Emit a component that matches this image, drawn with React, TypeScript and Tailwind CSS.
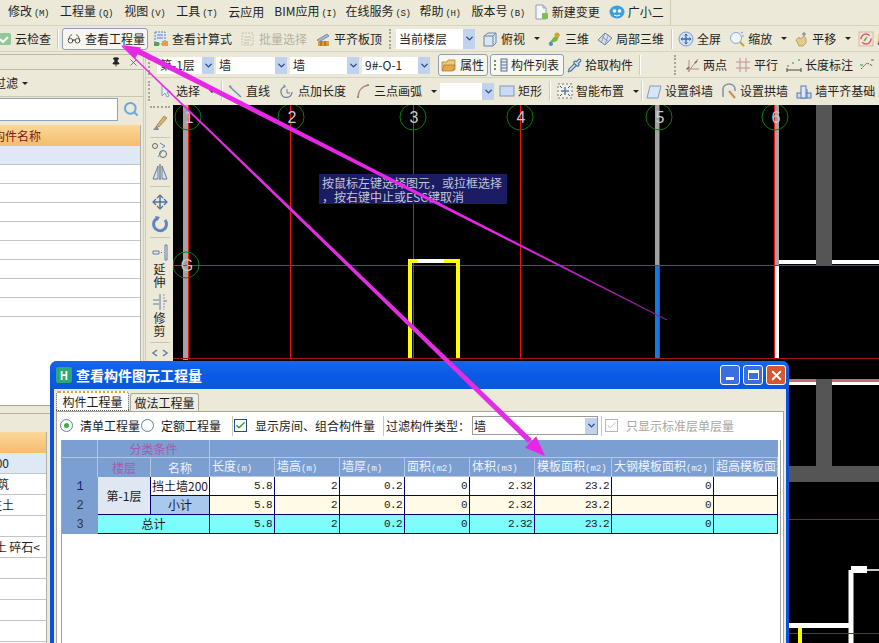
import { ReactNode } from "react";
import { Glasses, Pipette, Pin, X, Search, ChevronDown, Check } from "lucide-react";

type IconName =
  | "cloud" | "calc" | "batch" | "align" | "cube" | "three" | "local" | "full" | "zoom" | "pan" | "turn"
  | "attr" | "list" | "two" | "para" | "dim" | "angle" | "cursor" | "line" | "ptlen" | "arc" | "rect"
  | "smart" | "slant" | "arch" | "base" | "newdoc" | "bot";

const glyphs: Record<IconName, ReactNode> = {
  cloud: <><rect x="1" y="2" width="14" height="12" rx="2" fill="#8fc99a" /><path d="M4 8l3 3 5-5" stroke="#fff" strokeWidth="2" fill="none" /></>,
  calc: <><rect x="2" y="1" width="10" height="12" fill="#dfe8f5" stroke="#5a7fb5" strokeDasharray="2 1" /><path d="M4 4h6M4 7h6" stroke="#5a7fb5" /><rect x="1" y="11" width="5" height="4" fill="#5aa05a" /><rect x="9" y="10" width="6" height="5" fill="#e0a050" /></>,
  batch: <><rect x="2" y="2" width="11" height="12" fill="none" stroke="#c4c1b0" strokeDasharray="2 1" /><path d="M4 6h7M4 9h7M4 12h5" stroke="#c4c1b0" /></>,
  align: <><path d="M2 9l10-6 2 2-10 6z" fill="#9db7d8" stroke="#667" strokeWidth=".6" /><rect x="3" y="10" width="11" height="5" fill="#d99a3c" /><path d="M6 10v5M10 10v5" stroke="#8a5a20" /></>,
  cube: <><path d="M2 5l4-3h8v10l-3 3H2z" fill="#dbe6f3" stroke="#6b87a8" /><path d="M2 5h9v10M11 5l3-3" stroke="#6b87a8" fill="none" /></>,
  three: <><path d="M2 13l6-7 6-3-3 7z" fill="#79b54a" /><circle cx="11" cy="4" r="2.5" fill="#d9a03c" /><circle cx="5" cy="13" r="2" fill="#4f8fc9" /></>,
  local: <><path d="M1 9l7-7 7 5-7 7z" fill="#d7e0ea" stroke="#6f84a0" /><path d="M4.5 5.5l7 5M8 2l-3.500 9M11 4.500l-3 9" stroke="#6f84a0" strokeWidth=".7" /></>,
  full: <><circle cx="8" cy="8" r="7" fill="#cfe0f4" stroke="#7b9cc7" /><path d="M8 3v10M3 8h10" stroke="#3f66a5" strokeWidth="1.300" /><path d="M6.500 4.500L8 3l1.500 1.500M6.500 11.500L8 13l1.500-1.500M4.500 6.500L3 8l1.500 1.500M11.500 6.500L13 8l-1.500 1.500" stroke="#3f66a5" fill="none" /></>,
  zoom: <><circle cx="7" cy="7" r="5.500" fill="#eef4fb" stroke="#8da9c9" /><path d="M11 11l4 4" stroke="#c9a040" strokeWidth="2" /><path d="M12 2l2-1M13 5h2" stroke="#7b9cc7" /></>,
  pan: <><path d="M3 9l3-3 1 2 4-3 2 3v4l-3 3H6z" fill="#e9c98a" stroke="#a8894f" strokeWidth=".7" /><path d="M11 1v4M9 3h4" stroke="#7b7b7b" /></>,
  turn: <><rect x="1" y="1" width="14" height="14" fill="#f4e7d8" stroke="#d5b8a0" /><circle cx="8" cy="8" r="5" fill="none" stroke="#d85a6a" strokeWidth="1.500" strokeDasharray="12 3" /><path d="M6 10l3-4" stroke="#6fa86f" strokeWidth="1.500" /></>,
  attr: <><path d="M1 5h5l1-2h7v10H1z" fill="#f0c87a" stroke="#a07a30" strokeWidth=".7" /><path d="M3 8h11l-2 6H1z" fill="#e8a848" stroke="#a07a30" strokeWidth=".7" /></>,
  list: <><path d="M2 3v11" stroke="#6f8f6f" strokeDasharray="2 2" strokeWidth="2" /><rect x="8" y="2" width="6" height="12" fill="#e8eef6" stroke="#5a7396" /><path d="M8 5h6M8 8h6M8 11h6" stroke="#5a7396" /></>,
  two: <><path d="M2 12h13M4 15L14 2M5 3v12" stroke="#b58a86" fill="none" /><path d="M3 12l2-2M11 6l2-2" stroke="#666" strokeWidth="1.500" /></>,
  para: <path d="M5 1v14M11 1v14M1 5h14M1 11h14" stroke="#c28f96" fill="none" />,
  dim: <><path d="M1 11v4M15 11v4M1 13h14" stroke="#444" fill="none" /><path d="M1 9h2M6 6h2M12 3h2" stroke="#6fae6f" strokeWidth="1.500" /></>,
  angle: <><path d="M2 12l6-6 6 3" stroke="#555" fill="none" strokeDasharray="2 1" /><path d="M1 8h3M12 3h3" stroke="#6fae6f" strokeWidth="1.500" /></>,
  cursor: <path d="M5 2v11l3-3 2 4 2-1-2-4h4z" fill="#eef3fa" stroke="#7f9cc2" />,
  line: <><path d="M2 3l12 11" stroke="#6b8fc0" strokeWidth="1.500" /><path d="M3 2l2 3" stroke="#999" /></>,
  ptlen: <><path d="M13 9a5.500 5.500 0 1 1-8-5" fill="none" stroke="#6b7f9c" strokeWidth="1.200" /><path d="M8 6v4h3" stroke="#6b7f9c" fill="none" /><path d="M5 1l2 3-3 1z" fill="#5f8fd0" /></>,
  arc: <><path d="M3 15C3 8 7 3 14 2" fill="none" stroke="#b08a80" strokeWidth="1.500" /><path d="M2 14h2M13 1v2" stroke="#777" /></>,
  rect: <rect x="1" y="3" width="14" height="10" fill="#c9daf2" stroke="#7d98c0" />,
  smart: <><rect x="1" y="1" width="14" height="14" fill="#f1f1ea" stroke="#777" strokeDasharray="2 2" /><path d="M8 4v8M4 8h8" stroke="#5a7fb5" strokeWidth="1.500" /><path d="M3 3l2 2M13 3l-2 2M3 13l2-2M13 13l-2-2" stroke="#555" /></>,
  slant: <path d="M4 3h11l-3 12H1z" fill="#d7e5f5" stroke="#7e9cc4" />,
  arch: <><path d="M2 14V6a6 5 0 0 1 12 0v2" fill="none" stroke="#7d93ad" strokeWidth="1.500" /><path d="M8 8l6 7" stroke="#c28f60" strokeWidth="2" /></>,
  base: <><rect x="1" y="10" width="14" height="5" fill="#c9daf2" stroke="#5a7ab0" /><rect x="5" y="3" width="5" height="12" fill="#dbe7f6" stroke="#5a7ab0" /><path d="M11 6v9" stroke="#5a7ab0" /></>,
  newdoc: <><path d="M3 1h7l3 3v11H3z" fill="#f6f7f9" stroke="#8ba0bd" /><path d="M10 1v3h3" fill="none" stroke="#8ba0bd" /><rect x="9" y="9" width="6" height="6" rx="1" fill="#7fbf4d" /></>,
  bot: <><ellipse cx="8" cy="8" rx="7.500" ry="6.500" fill="#3d9fe0" /><circle cx="5.500" cy="7" r="1.800" fill="#fff" /><circle cx="10.500" cy="7" r="1.800" fill="#fff" /><path d="M5 11q3 2 6 0" stroke="#fff" fill="none" /></>,
};

function Icon({ name }: { name: IconName }) {
  return (
    <svg viewBox="0 0 16 16" className="w-[16px] h-[16px] shrink-0">
      {glyphs[name]}
    </svg>
  );
}

function Caret({ className = "" }: { className?: string }) {
  return <span className={`w-0 h-0 border-x-[3px] border-x-transparent border-t-[3px] border-t-[#222] shrink-0 ${className}`} />;
}

function Tool({ icon, label, caret, className = "", muted }: { icon: IconName; label: string; caret?: boolean; className?: string; muted?: boolean }) {
  return (
    <div className={`flex items-center gap-[3px] shrink-0 ${className}`}>
      <Icon name={icon} />
      <span className={muted ? "text-[#b5b2a2]" : ""}>{label}</span>
      {caret && <Caret className="ml-[6px]" />}
    </div>
  );
}

function Sep({ className = "" }: { className?: string }) {
  return <span className={`w-px h-[20px] bg-[#cfccb8] border-r border-white shrink-0 box-content ${className}`} />;
}

function Grip({ className = "" }: { className?: string }) {
  return <span className={`w-[2px] h-[20px] border-l-2 border-dotted border-[#a8a594] shrink-0 ${className}`} />;
}

function Combo({ label, className = "" }: { label?: string; className?: string }) {
  return (
    <div className={`flex items-center bg-white h-[17px] shrink-0 ${className}`}>
      <span className="flex-1 pl-[3px] whitespace-nowrap overflow-hidden">{label}</span>
      <span className="w-[12px] h-full flex items-center justify-center bg-[#c1d2ee]">
        <ChevronDown size={11} strokeWidth={3} className="text-[#2b4a8a]" />
      </span>
    </div>
  );
}

function Menu({ name, hot, className = "" }: { name: string; hot?: string; className?: string }) {
  return (
    <span className={`shrink-0 whitespace-nowrap ${className}`}>
      {name}
      {hot && <span className="ml-[2px] text-[9px] tracking-[-0.4px] font-['Liberation_Mono',monospace]">({hot})</span>}
    </span>
  );
}

function Clip({ text, w }: { text: string; w: string }) {
  return <div className={`flex justify-end overflow-hidden whitespace-nowrap ${w}`}>{text}</div>;
}

const upperRows = [0, 1, 2, 3, 4, 5, 6, 7, 8];
const lowerRows = ["00", "筑", "注土", "", "土 碎石<", "", "", "", ""];

const axes = [
  { x: 188, y: 117, t: "1" },
  { x: 291, y: 117, t: "2" },
  { x: 413, y: 117, t: "3" },
  { x: 520, y: 117, t: "4" },
  { x: 659, y: 117, t: "5" },
  { x: 775, y: 117, t: "6" },
  { x: 186, y: 265, t: "G" },
];

function CadDrawing() {
  return (
    <svg viewBox="173 105 706 538" className="w-full h-full block bg-black">
      <rect x="183" y="105" width="5" height="255" fill="#a3a3a3" />
      <rect x="655" y="105" width="4" height="160" fill="#a3a3a3" />
      <rect x="655" y="265" width="4" height="94" fill="#1876e0" />
      <rect x="775" y="105" width="4" height="160" fill="#a3a3a3" />
      <rect x="775" y="265" width="4" height="94" fill="#fff" />
      <rect x="816" y="105" width="16" height="160" fill="#555" />
      <rect x="779" y="260" width="37" height="4" fill="#fff" />
      <rect x="832" y="260" width="47" height="4" fill="#fff" />
      {[188, 290, 413, 520, 659, 774].map((x) => (
        <line key={x} x1={x + 0.5} y1="105" x2={x + 0.5} y2="359" stroke="#f01010" />
      ))}
      <line x1="173" y1="265.500" x2="879" y2="265.500" stroke="#f01010" />
      <line x1="173" y1="358.500" x2="879" y2="358.500" stroke="#a01818" />
      <path d="M410 358V261H458V358" fill="none" stroke="#ffff00" strokeWidth="4" />
      <rect x="418" y="259" width="26" height="4" fill="#fff" />
      {/* area right of the dialog */}
      <rect x="789" y="379" width="90" height="3" fill="#c86a78" />
      <rect x="789" y="382" width="90" height="3" fill="#fff" />
      <rect x="816" y="379" width="16" height="88" fill="#555" />
      <rect x="789" y="466" width="90" height="16" fill="#555" />
      <line x1="789" y1="519.500" x2="879" y2="519.500" stroke="#a01818" />
      <path d="M789 625.500H851V643M851 625.500V570" fill="none" stroke="#fff" strokeWidth="5" />
      <rect x="851" y="566" width="16" height="7" fill="#fff" />
      <rect x="867" y="569" width="12" height="2" fill="#c8c8c8" />
      <line x1="789" y1="633.500" x2="879" y2="633.500" stroke="#a01818" />
      <rect x="798" y="628" width="4" height="15" fill="#ffff00" />
      {axes.map((a) => (
        <g key={a.t}>
          <circle cx={a.x} cy={a.y} r="13" fill="none" stroke="#0f7a0f" />
          <text x={a.x + 1} y={a.y + 6} textAnchor="middle" fontSize="16" fill="#c8c8c8" fontFamily="Liberation Sans, sans-serif">
            {a.t}
          </text>
        </g>
      ))}
    </svg>
  );
}

function Arrows() {
  return (
    <svg viewBox="0 0 879 643" className="absolute inset-0 w-[879px] h-[643px] pointer-events-none z-20">
      <defs>
        <linearGradient id="fade" gradientUnits="userSpaceOnUse" x1="500" y1="235" x2="667" y2="320">
          <stop offset="0" stopColor="#e826e8" />
          <stop offset="1" stopColor="#7a2088" />
        </linearGradient>
      </defs>
      <polygon points="137,47.500 134.500,52.500 666.800,320.400 667.200,319.600" fill="url(#fade)" />
      <polygon points="122,45 141,47.500 135,59" fill="#e826e8" />
      <polygon points="121.650,46.400 122.350,45.600 531.900,439.100 528.100,442.900" fill="#e22ee2" />
      <polygon points="545,456 525,447.800 536.200,436.300" fill="#e826e8" />
    </svg>
  );
}

function LeftPanel() {
  return (
    <div className="w-[143px] shrink-0 flex flex-col h-full">
      <div className="h-[2px]" />
      <div className="h-[16px] border-y border-[#bdbaa6] flex items-center justify-end gap-[7px] pr-[4px]">
        <Pin size={10} className="text-[#222]" fill="#222" />
        <X size={11} strokeWidth={1.500} className="text-[#444]" />
      </div>
      <div className="h-[27px] flex items-center border-b border-[#c8c5b2]">
        <Clip text="过滤" w="w-[18px]" />
        <Caret className="ml-[4px]" />
      </div>
      <div className="h-[24px] flex items-center">
        <div className="w-[118px] h-[23px] bg-white border-y border-r border-[#8fa3b8]" />
        <Search size={16} strokeWidth={3} className="ml-[5px] text-[#6fa5dc]" />
      </div>
      <div className="h-[4px]" />
      <div className="w-[141px] border-r border-[#b0b0a8] bg-white flex flex-col h-[280px]">
        <div className="h-[21px] shrink-0 bg-gradient-to-b from-[#fbd79a] to-[#f3bd6c] flex items-center text-[#7a1a1a]">
          <Clip text="构件名称" w="w-[41px]" />
        </div>
        {upperRows.map((r) => (
          <div key={r} className={`h-[19px] shrink-0 border-b border-[#c4c4c4] ${r === 0 ? "bg-[#dfe8f5]" : ""}`} />
        ))}
      </div>
      <div className="h-px bg-[#a9a695]" />
      <div className="h-[7px]" />
      <div className="h-[19px] border-t border-[#b5b2a0]" />
      <div className="w-[47px] border-r border-[#b0b0a8] bg-white flex-1">
        <div className="h-[21px] bg-gradient-to-b from-[#fbd79a] to-[#f3bd6c]" />
        {lowerRows.map((t, i) => (
          <div key={i} className={`h-[21px] border-b border-[#c4c4c4] flex items-center ${i === 0 ? "bg-[#dfe8f5]" : ""}`}>
            <Clip text={t} w={i === 4 ? "w-[40px]" : i === 2 ? "w-[14px]" : "w-[9px]"} />
          </div>
        ))}
      </div>
    </div>
  );
}

function VerticalBar() {
  return (
    <div className="w-[27px] shrink-0 flex flex-col items-center text-center leading-[13px] pt-[1px]">
      <span className="w-[20px] h-[2px] border-t-2 border-dotted border-[#a8a594]" />
      <svg viewBox="0 0 18 18" className="w-[18px] h-[18px] mt-[6px]"><path d="M13 2L6 11l2 2 8-9z" fill="#d8b070" stroke="#8a6a30" strokeWidth=".6" /><path d="M6 11l-4 5h6z" fill="#888" /></svg>
      <span className="w-[20px] h-px bg-[#c8c5b2] mt-[5px]" />
      <svg viewBox="0 0 18 18" className="w-[18px] h-[18px] mt-[3px]"><circle cx="4" cy="5" r="2.500" fill="none" stroke="#667" /><circle cx="12" cy="13" r="3.500" fill="none" stroke="#667" /><path d="M9 2l5 3-3 2M7 16l5-7" stroke="#5f88c0" fill="none" /></svg>
      <svg viewBox="0 0 18 18" className="w-[18px] h-[18px] mt-[4px]"><path d="M2 16L7 3v13zM16 16L11 3v13z" fill="#d4e0f0" stroke="#5f7fa8" /><path d="M9 1v16" stroke="#555" /></svg>
      <span className="w-[20px] h-px bg-[#c8c5b2] mt-[5px]" />
      <svg viewBox="0 0 18 18" className="w-[18px] h-[18px] mt-[6px]"><path d="M9 2v14M2 9h14" stroke="#4f70a0" strokeWidth="1.500" /><path d="M6 5l3-3 3 3M6 13l3 3 3-3M5 6L2 9l3 3M13 6l3 3-3 3" stroke="#4f70a0" fill="none" strokeWidth="1.200" /></svg>
      <svg viewBox="0 0 18 18" className="w-[18px] h-[18px] mt-[4px]"><path d="M14 5a6.500 6.500 0 1 1-7-2" fill="none" stroke="#5f85c0" strokeWidth="3" /><path d="M4 1l5 1-3 4z" fill="#5f85c0" /></svg>
      <span className="w-[20px] h-px bg-[#c8c5b2] mt-[4px]" />
      <svg viewBox="0 0 18 18" className="w-[18px] h-[18px] mt-[6px]"><path d="M2 7h6v3H2z" fill="none" stroke="#5f7fa8" /><path d="M10 8.500h2" stroke="#666" strokeDasharray="1 1" /><path d="M14 1v15h2V1z" fill="none" stroke="#5f7fa8" /></svg>
      <span>延</span>
      <span>伸</span>
      <svg viewBox="0 0 18 18" className="w-[18px] h-[18px] mt-[5px]"><path d="M2 7h6M2 11h6M9 1v16M13 8h3" stroke="#5f7fa8" fill="none" /><path d="M13 1v16" stroke="#999" strokeDasharray="2 1" /></svg>
      <span>修</span>
      <span>剪</span>
      <span className="w-[20px] h-px bg-[#c8c5b2] mt-[5px]" />
      <svg viewBox="0 0 18 8" className="w-[18px] h-[8px] mt-[6px]"><path d="M6 1L2 4l4 3M12 1l4 3-4 3" stroke="#5f7fa8" fill="none" strokeWidth="1.500" /></svg>
    </div>
  );
}

const headCell = "border-r border-b border-[#b4c8e4] px-[2px] text-left font-normal overflow-hidden whitespace-nowrap text-[#eef3fb]";
const numCell = "border-r border-b border-[#000070] pr-[2px] text-right font-['Liberation_Mono',monospace] text-[11px] tracking-[-0.6px]";

function Head({ name, unit }: { name: string; unit: string }) {
  return (
    <th className={headCell}>
      {name}
      <span className="text-[9px] font-['Liberation_Mono',monospace]">({unit})</span>
    </th>
  );
}

function QuantityCells({ color }: { color: string }) {
  const values = ["5.8", "2", "0.2", "0", "2.32", "23.2", "0", ""];
  return (
    <>
      {values.map((v, i) => (
        <td key={i} className={`${numCell} ${color}`}>
          {v}
        </td>
      ))}
    </>
  );
}

function QuantityTable() {
  return (
    <table className="table-fixed border-separate border-spacing-0 w-[716px] text-[12px] leading-none">
      <colgroup>
        <col className="w-[36px]" />
        <col className="w-[53px]" />
        <col className="w-[59px]" />
        <col className="w-[65px]" />
        <col className="w-[65px]" />
        <col className="w-[65px]" />
        <col className="w-[65px]" />
        <col className="w-[65px]" />
        <col className="w-[77px]" />
        <col className="w-[102px]" />
        <col className="w-[64px]" />
      </colgroup>
      <thead className="bg-[#7b9fd1]">
        <tr className="h-[18px]">
          <th className="border-r border-b border-[#b4c8e4]" />
          <th colSpan={2} className="border-r border-b border-[#b4c8e4] font-normal text-[#a65ab0]">分类条件</th>
          <th colSpan={8} className="border-b border-[#b4c8e4]" />
        </tr>
        <tr className="h-[19px]">
          <th className="border-r border-[#b4c8e4]" />
          <th className="border-r border-[#b4c8e4] font-normal text-[#a65ab0]">楼层</th>
          <th className="border-r border-[#b4c8e4] font-normal text-[#eef3fb]">名称</th>
          <Head name="长度" unit="m" />
          <Head name="墙高" unit="m" />
          <Head name="墙厚" unit="m" />
          <Head name="面积" unit="m2" />
          <Head name="体积" unit="m3" />
          <Head name="模板面积" unit="m2" />
          <Head name="大钢模板面积" unit="m2" />
          <Head name="超高模板面积" unit="m2" />
        </tr>
      </thead>
      <tbody>
        <tr className="h-[19px]">
          <td className="bg-[#7b9fd1] text-center text-[#1c1c70] font-['Liberation_Mono',monospace]">1</td>
          <td rowSpan={2} className="bg-[#dfe7f3] text-center border-r border-b border-[#000070]">第-1层</td>
          <td className="bg-white border-r border-b border-[#000070] whitespace-nowrap text-center">挡土墙200</td>
          <QuantityCells color="bg-white" />
        </tr>
        <tr className="h-[19px]">
          <td className="bg-[#7b9fd1] text-center text-[#333] font-['Liberation_Mono',monospace]">2</td>
          <td className="bg-[#a9c8ee] text-center border-r border-b border-[#000070]">小计</td>
          <QuantityCells color="bg-[#fffbe6]" />
        </tr>
        <tr className="h-[19px]">
          <td className="bg-[#7b9fd1] text-center text-[#333] font-['Liberation_Mono',monospace]">3</td>
          <td colSpan={2} className="bg-[#7ffcfc] text-center border-r border-b border-[#000070]">总计</td>
          <QuantityCells color="bg-[#7ffcfc]" />
        </tr>
      </tbody>
    </table>
  );
}

function Radio({ on }: { on?: boolean }) {
  return (
    <span className="w-[13px] h-[13px] rounded-full border border-[#5f7f9f] bg-white flex items-center justify-center shrink-0">
      {on && <span className="w-[5px] h-[5px] rounded-full bg-[#3fae3f]" />}
    </span>
  );
}

function Dialog() {
  return (
    <div className="absolute left-[50px] top-[361px] w-[739px] h-[290px] z-10 rounded-t-[7px] bg-[#0a50dc] flex flex-col text-[12px] text-[#1a1a1a]">
      <div className="h-[28px] shrink-0 rounded-t-[7px] bg-gradient-to-b from-[#1a66e8] via-[#0a5ae6] to-[#0c58d8] flex items-center pl-[6px] pr-[3px]">
        <span className="w-[16px] h-[16px] rounded-[2px] bg-[#2fa878] flex items-center justify-center text-white text-[11px] font-bold leading-none">H</span>
        <span className="ml-[4px] text-white text-[14px] font-bold leading-none">查看构件图元工程量</span>
        <div className="ml-auto flex gap-[3px]">
          <span className="w-[20px] h-[20px] rounded-[3px] border border-white bg-[#3a6fe0] flex items-end pl-[5px] pb-[4px]"><span className="w-[8px] h-[3px] bg-white" /></span>
          <span className="w-[20px] h-[20px] rounded-[3px] border border-white bg-[#3a6fe0] flex items-center justify-center"><span className="w-[11px] h-[10px] border border-white border-t-[3px]" /></span>
          <span className="w-[20px] h-[20px] rounded-[3px] border border-white bg-[#d8572e] flex items-center justify-center"><X size={15} strokeWidth={3} className="text-white" /></span>
        </div>
      </div>
      <div className="flex-1 ml-[4px] mr-[3px] bg-[#ece9d8] flex flex-col min-h-0">
        <div className="h-[22px] shrink-0 flex items-end pl-[2px]">
          <span className="h-[20px] w-[73px] flex items-center justify-center bg-white border border-dotted border-[#555] border-t-2 border-t-[#e8a030] rounded-t-[3px]">构件工程量</span>
          <span className="h-[18px] w-[69px] flex items-center justify-center bg-[#f0eee2] border border-[#a9a695] border-b-0 rounded-t-[3px] ml-px">做法工程量</span>
        </div>
        <div className="flex-1 ml-[2px] mr-[2px] bg-white border-t border-l border-r border-[#a9a695] flex flex-col">
          <div className="h-[27px] shrink-0 flex items-center pl-[3px]">
            <Radio on />
            <span className="ml-[7px]">清单工程量</span>
            <span className="ml-px"><Radio /></span>
            <span className="ml-[7px]">定额工程量</span>
            <span className="w-px h-[20px] bg-[#c8c5b2] ml-[11px]" />
            <span className="ml-[1px] w-[13px] h-[13px] border border-[#1f4f7f] bg-white flex items-center justify-center"><Check size={11} strokeWidth={3} className="text-[#2fa02f]" /></span>
            <span className="ml-[8px]">显示房间、组合构件量</span>
            <span className="w-px h-[20px] bg-[#c8c5b2] ml-[8px]" />
            <span className="ml-[2px]">过滤构件类型：</span>
            <div className="ml-[2px] w-[126px] h-[19px] border border-[#9a9a90] flex items-center bg-white">
              <span className="flex-1 pl-px">墙</span>
              <span className="w-[12px] h-[16px] bg-[#c1d2ee] flex items-center justify-center"><ChevronDown size={11} strokeWidth={3} className="text-[#2b4a8a]" /></span>
            </div>
            <span className="w-px h-[20px] bg-[#c8c5b2] ml-[3px]" />
            <span className="ml-[3px] w-[13px] h-[13px] border border-[#b8b8b0] flex items-center justify-center"><Check size={11} strokeWidth={2} className="text-[#b8b8b0]" /></span>
            <span className="ml-[8px] text-[#aaa89c]">只显示标准层单层量</span>
          </div>
          <div className="ml-[4px] mr-[2px] mt-[1px] flex-1 border-l border-r border-[#a0a0a0] pr-[1px] overflow-hidden">
            <QuantityTable />
          </div>
        </div>
      </div>
    </div>
  );
}

export default function App() {
  return (
    <div className="relative w-[879px] h-[643px] overflow-hidden bg-[#ece9d8] text-[12px] leading-none text-[#1f1f1f] font-['Noto_Sans_CJK_SC','Liberation_Sans',sans-serif]">
      {/* menu */}
      <div className="h-[26px] flex items-center border-b border-[#d6d3bf] whitespace-nowrap">
        <div className="w-[671px] h-full shrink-0 flex items-center pb-[2px] border-r border-[#cfccb8]">
          <Menu name="修改" hot="M" className="ml-[8px]" />
          <Menu name="工程量" hot="Q" className="ml-[11px]" />
          <Menu name="视图" hot="V" className="ml-[11px]" />
          <Menu name="工具" hot="T" className="ml-[11px]" />
          <Menu name="云应用" className="ml-[11px]" />
          <Menu name="BIM应用" hot="I" className="ml-[10px]" />
          <Menu name="在线服务" hot="S" className="ml-[9px]" />
          <Menu name="帮助" hot="H" className="ml-[9px]" />
          <Menu name="版本号" hot="B" className="ml-[11px]" />
          <Tool icon="newdoc" label="新建变更" className="ml-[8px]" />
          <Tool icon="bot" label="广小二" className="ml-[9px]" />
        </div>
      </div>

      {/* main toolbar */}
      <div className="h-[26px] flex items-center border-b border-[#d6d3bf] whitespace-nowrap overflow-hidden">
        <Tool icon="cloud" label="云检查" className="-ml-[4px]" />
        <Sep className="ml-[6px]" />
        <div className="ml-[3px] w-[86px] h-[22px] shrink-0 flex items-center bg-[#f7f6ef] border border-[#8e9fb5] rounded-[3px] pl-[4px]">
          <Glasses size={14} strokeWidth={1.500} className="text-[#444] shrink-0" />
          <span className="ml-[4px]">查看工程量</span>
        </div>
        <Tool icon="calc" label="查看计算式" className="ml-[5px]" />
        <Tool icon="batch" label="批量选择" muted className="ml-[8px]" />
        <Tool icon="align" label="平齐板顶" className="ml-[8px]" />
        <Grip className="ml-[7px]" />
        <Combo label="当前楼层" className="ml-[5px] w-[79px] h-[20px]" />
        <Tool icon="cube" label="俯视" caret className="ml-[7px]" />
        <Tool icon="three" label="三维" className="ml-[6px]" />
        <Tool icon="local" label="局部三维" className="ml-[8px]" />
        <Sep className="ml-[7px]" />
        <Tool icon="full" label="全屏" className="ml-[5px]" />
        <Tool icon="zoom" label="缩放" caret className="ml-[8px]" />
        <Tool icon="pan" label="平移" caret className="ml-[6px]" />
        <Tool icon="turn" label="屏幕旋转" className="ml-[7px]" />
      </div>

      <div className="h-[591px] flex">
        <LeftPanel />
        <div className="w-[3px] shrink-0 border-x border-[#cfccb8]" />
        <div className="flex-1 min-w-0 flex flex-col">
          <div className="h-[26px] shrink-0 flex items-center pt-[1px] border-b border-[#d6d3bf] whitespace-nowrap overflow-hidden">
            <Grip className="ml-[2px]" />
            <Combo label="第-1层" className="ml-[7px] w-[57px]" />
            <Combo label="墙" className="ml-[2px] w-[71px]" />
            <Combo label="墙" className="ml-[3px] w-[69px]" />
            <Combo label="9#-Q-1" className="ml-[3px] w-[68px]" />
            <div className="ml-[8px] w-[50px] h-[22px] shrink-0 flex items-center gap-[3px] pl-[2px] bg-[#f7f6ef] border border-[#8e9fb5] rounded-[3px]">
              <Icon name="attr" />
              属性
            </div>
            <div className="ml-[2px] w-[74px] h-[22px] shrink-0 flex items-center gap-[2px] pl-[2px] bg-[#f7f6ef] border border-[#8e9fb5] rounded-[3px]">
              <Icon name="list" />
              构件列表
            </div>
            <div className="ml-[3px] flex items-center gap-[3px] shrink-0">
              <Pipette size={15} className="text-[#4a76b0] shrink-0" />
              拾取构件
            </div>
            <Sep className="ml-[6px]" />
            <Grip className="ml-[33px]" />
            <Tool icon="two" label="两点" className="ml-[8px]" />
            <Tool icon="para" label="平行" className="ml-[8px]" />
            <Tool icon="dim" label="长度标注" className="ml-[8px]" />
            <Tool icon="angle" label="" className="ml-[6px]" />
          </div>
          <div className="h-[27px] shrink-0 flex items-center pb-[1px] whitespace-nowrap overflow-hidden">
            <Grip className="ml-[2px]" />
            <Tool icon="cursor" label="选择" caret className="ml-[7px]" />
            <Sep className="ml-[6px]" />
            <Tool icon="line" label="直线" className="ml-[4px]" />
            <Tool icon="ptlen" label="点加长度" className="ml-[9px]" />
            <Tool icon="arc" label="三点画弧" caret className="ml-[9px]" />
            <Combo className="ml-[3px] w-[54px]" />
            <Tool icon="rect" label="矩形" className="ml-[5px]" />
            <Sep className="ml-[7px]" />
            <Tool icon="smart" label="智能布置" caret className="ml-[6px]" />
            <Sep className="ml-[2px]" />
            <Tool icon="slant" label="设置斜墙" className="ml-[3px]" />
            <Tool icon="arch" label="设置拱墙" className="ml-[8px]" />
            <Tool icon="base" label="墙平齐基础" className="ml-[8px]" />
          </div>
          <div className="flex-1 min-h-0 flex">
            <VerticalBar />
            <div className="flex-1 min-w-0 relative">
              <CadDrawing />
              <div className="absolute left-[146px] top-[69px] w-[188px] h-[30px] bg-[#1c1c64] text-[#c4c4d4] pl-[3px] pt-[2px] leading-[14px]">
                <div>按鼠标左键选择图元，或拉框选择</div>
                <div>，按右键中止或ESC键取消</div>
              </div>
            </div>
          </div>
        </div>
      </div>

      <Dialog />
      <Arrows />
    </div>
  );
}
